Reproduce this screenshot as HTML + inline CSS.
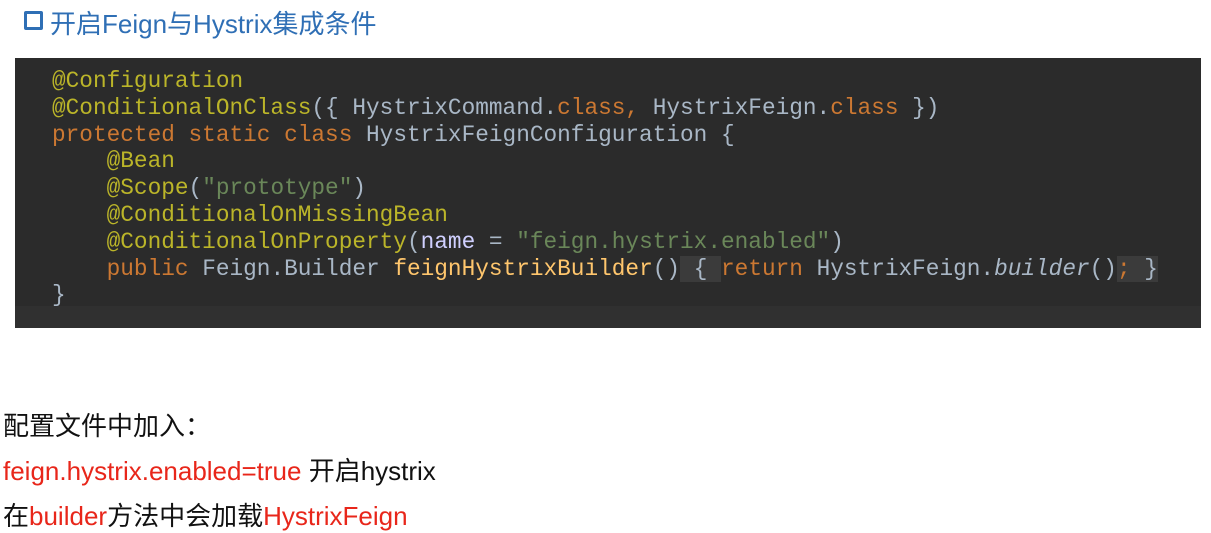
<!DOCTYPE html>
<html><head><meta charset="utf-8"><style>
body{margin:0;width:1211px;height:532px;background:#fff;position:relative;overflow:hidden;font-family:"Liberation Sans","Noto Sans CJK SC",sans-serif}
.t{position:absolute;left:50px;top:4px;font-size:26px;color:#2f6fb5;white-space:nowrap}
.sq{position:absolute;left:24px;top:11px;width:13px;height:13px;border:3px solid #2f6fb5;border-radius:2px}
.box{position:absolute;left:15px;top:58px;width:1186px;height:270px;background:#2b2b2b}
.box .bot{position:absolute;left:0;bottom:0;width:100%;height:22px;background:#303030}
pre{position:absolute;left:52px;top:68px;margin:0;font-family:"Liberation Mono",monospace;font-size:22.75px;line-height:26.8px;color:#a9b7c6}
.a{color:#bbb529}.k{color:#cc7832}.s{color:#6a8759}.f{color:#ffc66d}.n{color:#d0d0ff}.i{font-style:italic}
.h{background:#3b3b3b}
.p{position:absolute;left:3px;font-size:26px;color:#111;white-space:nowrap}
.r{color:#e8261a}
</style></head><body>
<div class="sq"></div>
<div class="t">开启Feign与Hystrix集成条件</div>
<div class="box"><div class="bot"></div></div>
<pre><span class="a">@Configuration</span>
<span class="a">@ConditionalOnClass</span>({ HystrixCommand.<span class="k">class, </span>HystrixFeign.<span class="k">class</span> })
<span class="k">protected static class </span>HystrixFeignConfiguration {
    <span class="a">@Bean</span>
    <span class="a">@Scope</span>(<span class="s">"prototype"</span>)
    <span class="a">@ConditionalOnMissingBean</span>
    <span class="a">@ConditionalOnProperty</span>(<span class="n">name</span> = <span class="s">"feign.hystrix.enabled"</span>)
    <span class="k">public </span>Feign.Builder <span class="f">feignHystrixBuilder</span>()<span class="h"> { </span><span class="k">return </span>HystrixFeign.<span class="i">builder</span>()<span class="h k">; </span><span class="h">}</span>
}</pre>
<div class="p" style="top:406px">配置文件中加入：</div>
<div class="p" style="top:451px"><span class="r">feign.hystrix.enabled=true</span> 开启hystrix</div>
<div class="p" style="top:496px">在<span class="r">builder</span>方法中会加载<span class="r">HystrixFeign</span></div>
</body></html>
